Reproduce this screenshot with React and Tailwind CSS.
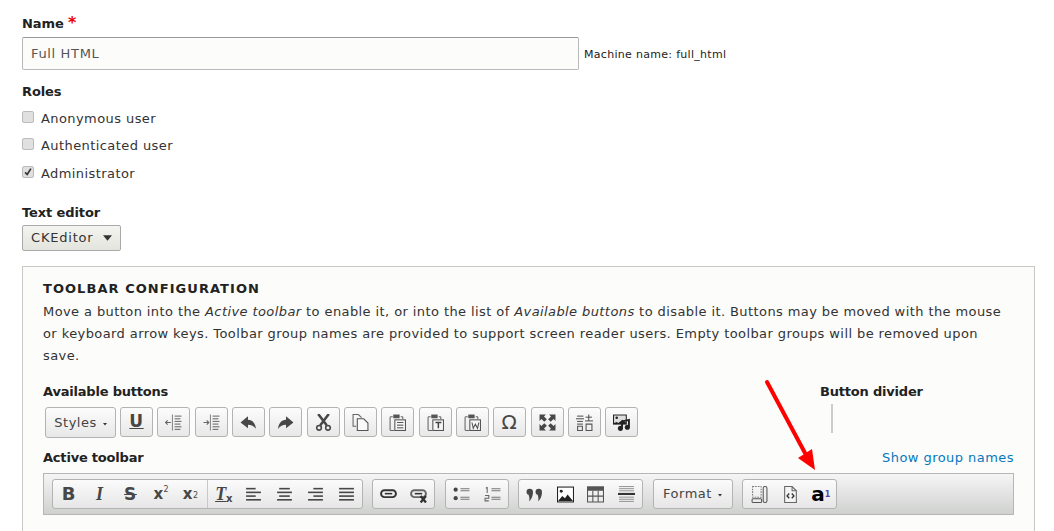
import React from "react";

const S = "#474747";

// toolbar icons, all on a 16x16 box
const Ico = ({ children, className = "" }) => (
  <svg viewBox="0 0 16 16" className={`w-[17px] h-[17px] ${className}`} fill="none">
    {children}
  </svg>
);

const Lines = ({ rows, stroke = S, w = 1.4 }) =>
  rows.map(([x1, x2, y], i) => <path key={i} d={`M${x1} ${y}H${x2}`} stroke={stroke} strokeWidth={w} />);

const IndentIcon = ({ flip }) => (
  <Ico>
    <path d="M7 0.500v15" stroke="#888" />
    <Lines stroke="#777" w={1.100} rows={[[9, 15.500, 2], [9, 14.500, 4.500], [9, 15.500, 7], [9, 14.500, 9.500], [9, 15.500, 12], [9, 14.500, 14.500]]} />
    {flip ? (
      <path d="M0.500 8H5.500M3.500 6l2 2-2 2" stroke="#666" />
    ) : (
      <path d="M5.500 8H0.500M2.500 6l-2 2 2 2" stroke="#666" />
    )}
  </Ico>
);

const UndoIcon = ({ flip }) => (
  <Ico className={flip ? "-scale-x-100" : ""}>
    <path d="M7.500 2 0.500 8 7.500 13.500V10c3.200 0 5.500 1 7.500 4C14.600 9 12 5.600 7.500 5.400z" fill={S} />
  </Ico>
);

const CutIcon = () => (
  <Ico>
    <path d="M3 0 11 10.500M13 0 5 10.500" stroke={S} strokeWidth="2.400" />
    <circle cx="3.800" cy="13" r="2.200" stroke={S} strokeWidth="1.500" />
    <circle cx="12.200" cy="13" r="2.200" stroke={S} strokeWidth="1.500" />
  </Ico>
);

const CopyIcon = () => (
  <Ico>
    <path d="M4 11.500H1V0.500h5l3 3" stroke="#666" />
    <path d="M5 4.500h6l4 4v7H5z" stroke="#555" fill="#fafafa" />
  </Ico>
);

const PasteIcon = ({ mark }) => (
  <Ico>
    <path d="M3.500 2.500H1.500C1 2.500 1 3 1 3.500v11c0 .5.500 1 1 1H5M11 2.500h1.500l.5.5v2" stroke="#666" />
    <rect x="4" y="0.500" width="6" height="3.500" fill="#555" />
    <rect x="5.500" y="5.500" width="10" height="10" stroke="#555" fill="#f6f6f6" />
    {mark === "lines" && <Lines stroke="#555" w={1} rows={[[7.500, 13.500, 8], [7.500, 13.500, 10.500], [7.500, 13.500, 13]]} />}
    {mark === "t" && <path d="M8 8h5.500M10.700 8V13.500" stroke="#444" strokeWidth="1.400" />}
    {mark === "w" && <path d="M7.500 8l1.200 5.500 2-4 2 4 1.300-5.500" stroke="#555" />}
  </Ico>
);

const MaxIcon = () => (
  <Ico>
    <path d="M0.500 0.500h6L4.700 2.300 7.400 5 5 7.400 2.300 4.700 0.500 6.500zM15.500 0.500v6L13.700 4.700 11 7.400 8.600 5l2.700-2.700L9.500 0.500zM0.500 15.500v-6l1.800 1.800L5 8.600 7.400 11l-2.700 2.700 1.800 1.800zM15.500 15.500h-6l1.800-1.800L8.600 11 11 8.600l2.700 2.700 1.800-1.800z" fill={S} />
  </Ico>
);

const LanguageIcon = () => (
  <Ico>
    <Lines stroke="#555" w={1} rows={[[1, 7, 2], [0, 7.500, 4.500], [1, 6.500, 7], [1, 6.500, 9.500], [9, 15, 3], [8.500, 16, 6.500]]} />
    <path d="M1.500 11.500h4.500v4H1.500zM12 0.500v6M9.500 9.500h5.500v6H9.500z" stroke="#555" />
  </Ico>
);

const MediaIcon = () => (
  <Ico>
    <path d="M0 0.500h13v9.500H0z" fill="#222" />
    <path d="M1 1.500h11v6.500L9 5.500 5 8.500 3.500 7.500 1 8.500z" fill="#ddd" />
    <circle cx="3.500" cy="3.500" r="1.200" fill="#222" />
    <path d="M8.500 13V7l6.500-1.500V12" stroke="#222" strokeWidth="1.800" />
    <circle cx="7" cy="13.500" r="2.400" fill="#222" />
    <circle cx="13.500" cy="12.500" r="2.400" fill="#222" />
  </Ico>
);

const LinkIcon = ({ off }) => (
  <Ico>
    <rect x="1" y="4" width="14" height="6.500" rx="3.200" stroke={off ? "#666" : "#333"} strokeWidth="1.800" />
    <path d="M4.500 7.200h7" stroke="#333" strokeWidth="1.500" />
    {off && <path d="M10 9.500l5 6M15 9.500l-5 6" stroke="#333" strokeWidth="2.200" />}
  </Ico>
);

const BulletIcon = () => (
  <Ico>
    <circle cx="2.500" cy="3.500" r="2" fill={S} />
    <circle cx="2.500" cy="11.500" r="2" fill={S} />
    <path d="M7 2.500h8.500M7 4.500h8.500M7 10.500h8.500M7 12.500h8.500" stroke="#777" />
  </Ico>
);

const NumberIcon = () => (
  <Ico>
    <path d="M3 1v5.500M1.800 2.300 3 1M1 9h3.500v2.500H1V14h3.500" stroke="#666" />
    <path d="M7 2.500h8.500M7 4.500h8.500M7 10.500h8.500M7 12.500h8.500" stroke="#777" />
  </Ico>
);

const QuoteIcon = () => (
  <Ico>
    <circle cx="3.500" cy="5.500" r="3" fill={S} />
    <circle cx="12" cy="5.500" r="3" fill={S} />
    <path d="M6.500 5.500C6.500 10 5.200 12.500 3 14.500c.5-2.500 0-4.500-.5-6zM15 5.500c0 4.500-1.300 7-3.500 9 .5-2.500 0-4.500-.5-6z" fill={S} />
  </Ico>
);

const ImageIcon = () => (
  <Ico>
    <rect x="0.500" y="1" width="15" height="14" fill="#fff" stroke="#222" />
    <path d="M1 14 5 9.500l2.500 2L10 8l5 6z" fill="#222" />
    <circle cx="4" cy="5" r="1.400" fill="#222" />
  </Ico>
);

const TableIcon = () => (
  <Ico>
    <rect x="0" y="0.500" width="16" height="4" fill="#555" />
    <path d="M.500 1h15v14H.500zM.500 9.500h15M5.500 4.500V15M10.500 4.500V15" stroke="#555" />
  </Ico>
);

const RuleIcon = () => (
  <Ico>
    <Lines stroke="#999" w={1} rows={[[1, 15, 0.500], [1, 15, 2.500], [1, 15, 4.500], [1, 15, 10.500], [1, 15, 12.500], [1, 15, 14.500]]} />
    <path d="M0 7.500h16" stroke="#333" strokeWidth="2" />
  </Ico>
);

const SourceIcon = () => (
  <Ico>
    <path d="M2.500 0.500h7l4 4v11h-11z" stroke="#666" fill="#f4f4f4" />
    <path d="M9.500 0.500v4h4" stroke="#666" />
    <path d="M6.800 7 4.800 9.300l2 2.300M9.200 7l2 2.300-2 2.300" stroke="#333" strokeWidth="1.300" />
  </Ico>
);

const TemplateIcon = () => (
  <Ico>
    <path d="M1.500 0.500h8v10h-8z" stroke="#777" strokeDasharray="1.500 1" />
    <rect x="1" y="12" width="9" height="3.500" rx="1" stroke="#555" />
    <rect x="11.500" y="0.500" width="3.500" height="15" rx="1.500" stroke="#555" />
  </Ico>
);

const AlignIcon = ({ rows }) => (
  <Ico>
    <Lines w={1.500} rows={rows} />
  </Ico>
);

const RemoveFormatIcon = () => (
  <span className="relative flex w-4 h-4 items-center justify-center">
    <span className="font-['Liberation_Serif',serif] italic font-bold text-[18px] leading-4 text-[#474747] underline -ml-1">T</span>
    <span className="absolute -right-0.5 -bottom-0.5 font-bold text-[10px] leading-none text-[#474747]">x</span>
  </span>
);

const Letter = ({ children, className = "" }) => (
  <span className={`flex w-4 h-4 items-center justify-center leading-4 text-[#474747] font-bold ${className}`}>
    {children}
  </span>
);

const Arrowhead = () => (
  <svg viewBox="0 0 4 4" className="w-1 h-1 ml-1.5 mt-0.5" fill="#333">
    <path d="M0 1h4L2 3.500z" />
  </svg>
);

const Key = ({ children, className = "" }) => (
  <div className={`flex items-center justify-center h-[30px] w-[33px] border border-[#b3b3b3] rounded-[3px] bg-linear-to-b from-[#fcfcfc] to-[#e8e8e8] ${className}`}>
    {children}
  </div>
);

// group of buttons in the active toolbar
const Group = ({ children, className = "" }) => (
  <div className={`flex items-center h-[30px] border border-[#b3b3b3] rounded-[3px] bg-linear-to-b from-[#fbfbfb] to-[#e6e6e6] ${className}`}>
    {children}
  </div>
);

const Cell = ({ children }) => <div className="flex justify-center w-[31px]">{children}</div>;

const Role = ({ label, checked, className = "" }) => (
  <div className={`flex items-center tracking-[0.42px] ${className}`}>
    <div className="flex items-center justify-center w-[12px] h-[12px] mr-[7px] -mt-[5px] rounded-[2px] border border-[#bbb] bg-[#e0e0e0]">
      {checked && (
        <svg viewBox="0 0 12 12" className="w-3 h-3" fill="none">
          <path d="M2.500 6.500 5 9l4.500-7" stroke="#333" strokeWidth="2" />
        </svg>
      )}
    </div>
    <span>{label}</span>
  </div>
);

export default function App() {
  return (
    <div className="relative h-[531px] overflow-hidden bg-white pl-[22px] pr-[19px] pt-[14px] font-['DejaVu_Sans',sans-serif] text-[13px] tracking-[0.5px] text-[#333]">
      <div className="font-bold tracking-[-0.1px] leading-[18px] text-[#222]">
        Name <span className="text-[#e00] text-[16px]">*</span>
      </div>

      <div className="flex items-end mt-[4px]">
        <div className="w-[557px] h-[33px] flex items-center px-[8px] border border-[#b8b8b8] border-t-[#999] rounded-[2px] bg-[#fcfcfa] tracking-[0.65px] text-[#555]">
          Full HTML
        </div>
        <span className="ml-[5px] mb-[7px] text-[11px] tracking-[0.3px] text-[#222]">Machine name: full_html</span>
      </div>

      <div className="mt-[13px] font-bold tracking-[-0.1px] leading-[18px] text-[#222]">Roles</div>
      <Role label="Anonymous user" className="mt-[9px] h-[18px]" />
      <Role label="Authenticated user" className="mt-[9px] h-[18px]" />
      <Role label="Administrator" checked className="mt-[10px] h-[18px]" />

      <div className="mt-[21px] font-bold tracking-[-0.1px] leading-[18px] text-[#222]">Text editor</div>
      <div className="flex items-center justify-between w-[99px] h-[26px] mt-[3px] px-[8px] border border-[#aaa] rounded-[2px] bg-linear-to-b from-[#f4f4f0] to-[#e4e4de] tracking-[0.8px] text-[#333]">
        CKEditor
        <svg viewBox="0 0 10 6" className="w-[9px] h-[6px]" fill="#333">
          <path d="M0 0h10L5 6z" />
        </svg>
      </div>

      <div className="mt-[15px] h-[400px] border border-[#c8c8c4] bg-[#fcfcfa] pl-[20px] pr-[20px] pt-[13px]">
        <div className="font-bold uppercase tracking-[1.05px] leading-[18px] text-[#222]">Toolbar configuration</div>
        <p className="mt-[3px] leading-[22px] tracking-[0.41px] text-[#333]">
          Move a button into the <em>Active toolbar</em> to enable it, or into the list of <em>Available buttons</em> to disable it. Buttons may be moved with the mouse
          or keyboard arrow keys. Toolbar group names are provided to support screen reader users. Empty toolbar groups will be removed upon
          save.
        </p>

        <div className="flex mt-[16px]">
          <div className="w-[777px]">
            <div className="font-bold leading-[18px] text-[#222] tracking-[-0.2px]">Available buttons</div>
            <div className="flex items-start gap-[4px] mt-[6px] ml-[2px]">
              <Key className="w-[71px] h-[31px] text-[#444]">
                Styles
                <Arrowhead />
              </Key>
              <Key>
                <span className="font-bold text-[17px] text-[#474747] underline">U</span>
              </Key>
              <Key><IndentIcon /></Key>
              <Key className="ml-[1px]"><IndentIcon flip /></Key>
              <Key><UndoIcon /></Key>
              <Key><UndoIcon flip /></Key>
              <Key className="ml-[1px]"><CutIcon /></Key>
              <Key><CopyIcon /></Key>
              <Key><PasteIcon mark="lines" /></Key>
              <Key className="ml-[1px]"><PasteIcon mark="t" /></Key>
              <Key><PasteIcon mark="w" /></Key>
              <Key><span className="text-[20px] text-[#474747]">Ω</span></Key>
              <Key className="ml-[1px]"><MaxIcon /></Key>
              <Key><LanguageIcon /></Key>
              <Key><MediaIcon /></Key>
            </div>
          </div>
          <div>
            <div className="font-bold leading-[18px] text-[#222] tracking-[-0.2px]">Button divider</div>
            <div className="ml-[11px] mt-[3px] h-[29px] w-[2px] bg-[#ccc]" />
          </div>
        </div>

        <div className="flex items-center justify-between mt-[11px] h-[18px]">
          <span className="font-bold text-[#222] tracking-[-0.2px]">Active toolbar</span>
          <span className="tracking-[0.45px] text-[#0678be]">Show group names</span>
        </div>

        <div className="flex items-center mt-[6px] w-[971px] h-[42px] pl-[7.500px] gap-[9.500px] border border-[#b6b6b6] bg-linear-to-b from-[#f5f5f5] to-[#cfd1cf]">
          <Group className="w-[311px] pl-[1px]">
            <Cell><Letter className="text-[18px]">B</Letter></Cell>
            <Cell><Letter className="text-[18px] italic font-['Liberation_Serif',serif]">I</Letter></Cell>
            <Cell><Letter className="text-[17px] line-through">S</Letter></Cell>
            <Cell>
              <Letter className="text-[15px]">x<sup className="text-[8px] font-normal">2</sup></Letter>
            </Cell>
            <div className="flex justify-center w-[31px] border-r border-[#c8c8c8] h-[28px] items-center pr-[2px]">
              <Letter className="text-[15px]">x<sub className="text-[8px] font-normal">2</sub></Letter>
            </div>
            <Cell><RemoveFormatIcon /></Cell>
            <Cell><AlignIcon rows={[[1, 10, 2.500], [1, 15, 6], [1, 10, 9.500], [1, 15, 13]]} /></Cell>
            <Cell><AlignIcon rows={[[3, 13, 2.500], [1, 15, 6], [3, 13, 9.500], [1, 15, 13]]} /></Cell>
            <Cell><AlignIcon rows={[[6, 15, 2.500], [1, 15, 6], [6, 15, 9.500], [1, 15, 13]]} /></Cell>
            <Cell><AlignIcon rows={[[1, 15, 2.500], [1, 15, 6], [1, 15, 9.500], [1, 15, 13]]} /></Cell>
          </Group>
          <Group className="w-[63px]">
            <Cell><LinkIcon /></Cell>
            <Cell><LinkIcon off /></Cell>
          </Group>
          <Group className="w-[64px]">
            <Cell><BulletIcon /></Cell>
            <Cell><NumberIcon /></Cell>
          </Group>
          <Group className="w-[125px]">
            <Cell><QuoteIcon /></Cell>
            <Cell><ImageIcon /></Cell>
            <Cell><TableIcon /></Cell>
            <Cell><RuleIcon /></Cell>
          </Group>
          <Group className="w-[80px] justify-center text-[#444]">
            Format
            <Arrowhead />
          </Group>
          <Group className="w-[95px] pl-[1px]">
            <Cell><TemplateIcon /></Cell>
            <Cell><SourceIcon /></Cell>
            <Cell>
              <span className="text-[20px] leading-4 font-bold tracking-normal text-black">
                a<sup className="text-[8px] font-bold text-[#54a]">1</sup>
              </span>
            </Cell>
          </Group>
        </div>
      </div>

      {/* red callout arrow drawn on top of the screenshot */}
      <svg viewBox="0 0 70 100" className="absolute left-[755px] top-[375px] w-[70px] h-[100px]" fill="none">
        <path d="M12 7 50 78" stroke="#f00" strokeWidth="4" strokeLinecap="round" />
        <path d="M43 83 57 74l3 21z" fill="#f00" />
      </svg>
    </div>
  );
}
